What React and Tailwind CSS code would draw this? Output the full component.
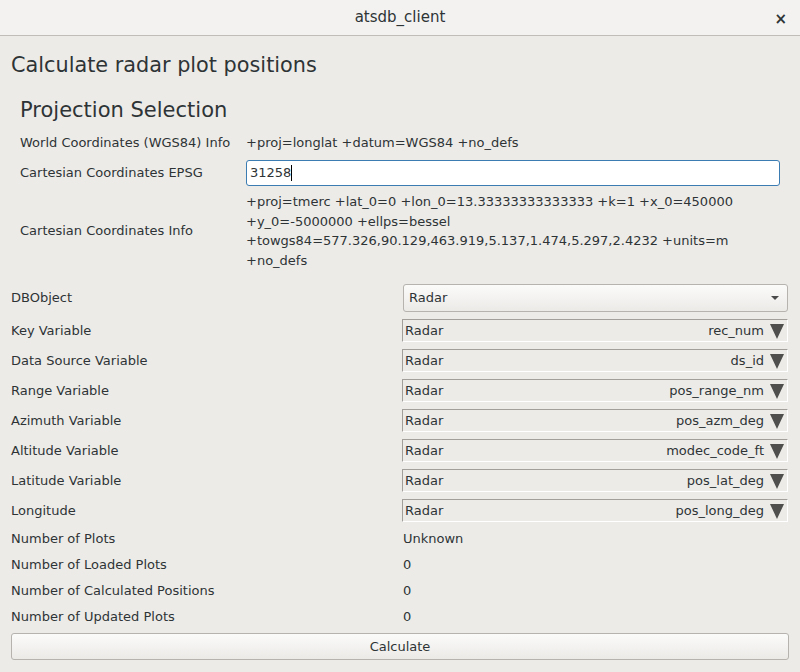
import React from 'react';

const font = { fontFamily: '"DejaVu Sans", "Noto Sans", sans-serif' };

const varRows = [
  { label: 'Key Variable', value: 'rec_num' },
  { label: 'Data Source Variable', value: 'ds_id' },
  { label: 'Range Variable', value: 'pos_range_nm' },
  { label: 'Azimuth Variable', value: 'pos_azm_deg' },
  { label: 'Altitude Variable', value: 'modec_code_ft' },
  { label: 'Latitude Variable', value: 'pos_lat_deg' },
  { label: 'Longitude', value: 'pos_long_deg' },
];

const infoRows = [
  { label: 'Number of Plots', value: 'Unknown' },
  { label: 'Number of Loaded Plots', value: '0' },
  { label: 'Number of Calculated Positions', value: '0' },
  { label: 'Number of Updated Plots', value: '0' },
];

function Triangle() {
  return (
    <svg width="16" height="18" viewBox="0 0 16 18" className="ml-[5px]">
      <polygon points="1,2 15,2 8,17" fill="#4f504d" />
    </svg>
  );
}

export default function App() {
  return (
    <div className="w-[800px] h-[672px] bg-[#edebe8] text-[#2e3436] text-[13px] overflow-hidden flex flex-col" style={font}>
      {/* Title bar */}
      <div className="h-[36px] shrink-0 bg-[#f3f2f1] border-b border-[#c0bdb8] flex items-center justify-center relative">
        <span className="text-[15px] text-[#2e3436]">atsdb_client</span>
        <span className="absolute right-[13px] top-[8px] text-[15px] font-bold text-[#2e3436]">×</span>
      </div>

      <div className="px-[11px] flex flex-col">
        <div className="h-[56px] flex items-center text-[20.8px] pt-[4px]">Calculate radar plot positions</div>

        {/* Projection Selection */}
        <div className="pl-[9px] flex flex-col">
          <div className="h-[36px] flex items-center text-[21px] pt-[2px]">Projection Selection</div>
          <div className="h-[28px] flex items-center pt-[1px]">
            <span className="w-[226px]">World Coordinates (WGS84) Info</span>
            <span>+proj=longlat +datum=WGS84 +no_defs</span>
          </div>
          <div className="h-[34px] flex items-center">
            <span className="w-[226px]">Cartesian Coordinates EPSG</span>
            <div className="w-[534px] h-[26px] bg-white border border-[#3b7cb3] rounded-[3px] flex items-center px-[3px]">
              <span>31258</span>
              <span className="w-px h-[16px] bg-black" />
            </div>
          </div>
          <div className="flex items-center py-[2px]">
            <span className="w-[226px] shrink-0">Cartesian Coordinates Info</span>
            <div className="leading-[19.5px]">
              +proj=tmerc +lat_0=0 +lon_0=13.33333333333333 +k=1 +x_0=450000<br />
              +y_0=-5000000 +ellps=bessel<br />
              +towgs84=577.326,90.129,463.919,5.137,1.474,5.297,2.4232 +units=m<br />
              +no_defs
            </div>
          </div>
        </div>

        {/* DBObject */}
        <div className="h-[34px] flex items-center mt-[9px]">
          <span className="w-[392px]">DBObject</span>
          <div className="w-[385px] h-[28px] rounded-[3px] border border-[#b6b3ae] bg-gradient-to-b from-[#fbfbfa] to-[#eceae7] flex items-center justify-between pl-[5px] pr-[8px]">
            <span>Radar</span>
            <svg width="8" height="5" viewBox="0 0 8 5">
              <polygon points="0,0 8,0 4,4" fill="#4a4a4a" />
            </svg>
          </div>
        </div>

        {varRows.map((r) => (
          <div key={r.label} className="h-[30px] flex items-center">
            <span className="w-[391px] pt-[1px]">{r.label}</span>
            <div className="w-[386px] h-[23px] mt-[1px] border-t border-l border-[#a29f9a] border-r border-b border-r-[#ffffff] border-b-[#ffffff] flex items-center justify-between pl-[2px] pr-[2px]">
              <span>Radar</span>
              <span className="flex items-center">
                {r.value}
                <Triangle />
              </span>
            </div>
          </div>
        ))}

        <div className="mt-[1px] flex flex-col">
          {infoRows.map((r) => (
            <div key={r.label} className="h-[26px] flex items-center">
              <span className="w-[392px]">{r.label}</span>
              <span>{r.value}</span>
            </div>
          ))}
        </div>

        <button className="mt-[3px] w-[778px] h-[27px] rounded-[3px] border border-[#b6b3ae] bg-gradient-to-b from-[#fbfbfa] to-[#eceae7] text-[13px] text-[#2e3436]" style={font}>
          Calculate
        </button>
      </div>
    </div>
  );
}
